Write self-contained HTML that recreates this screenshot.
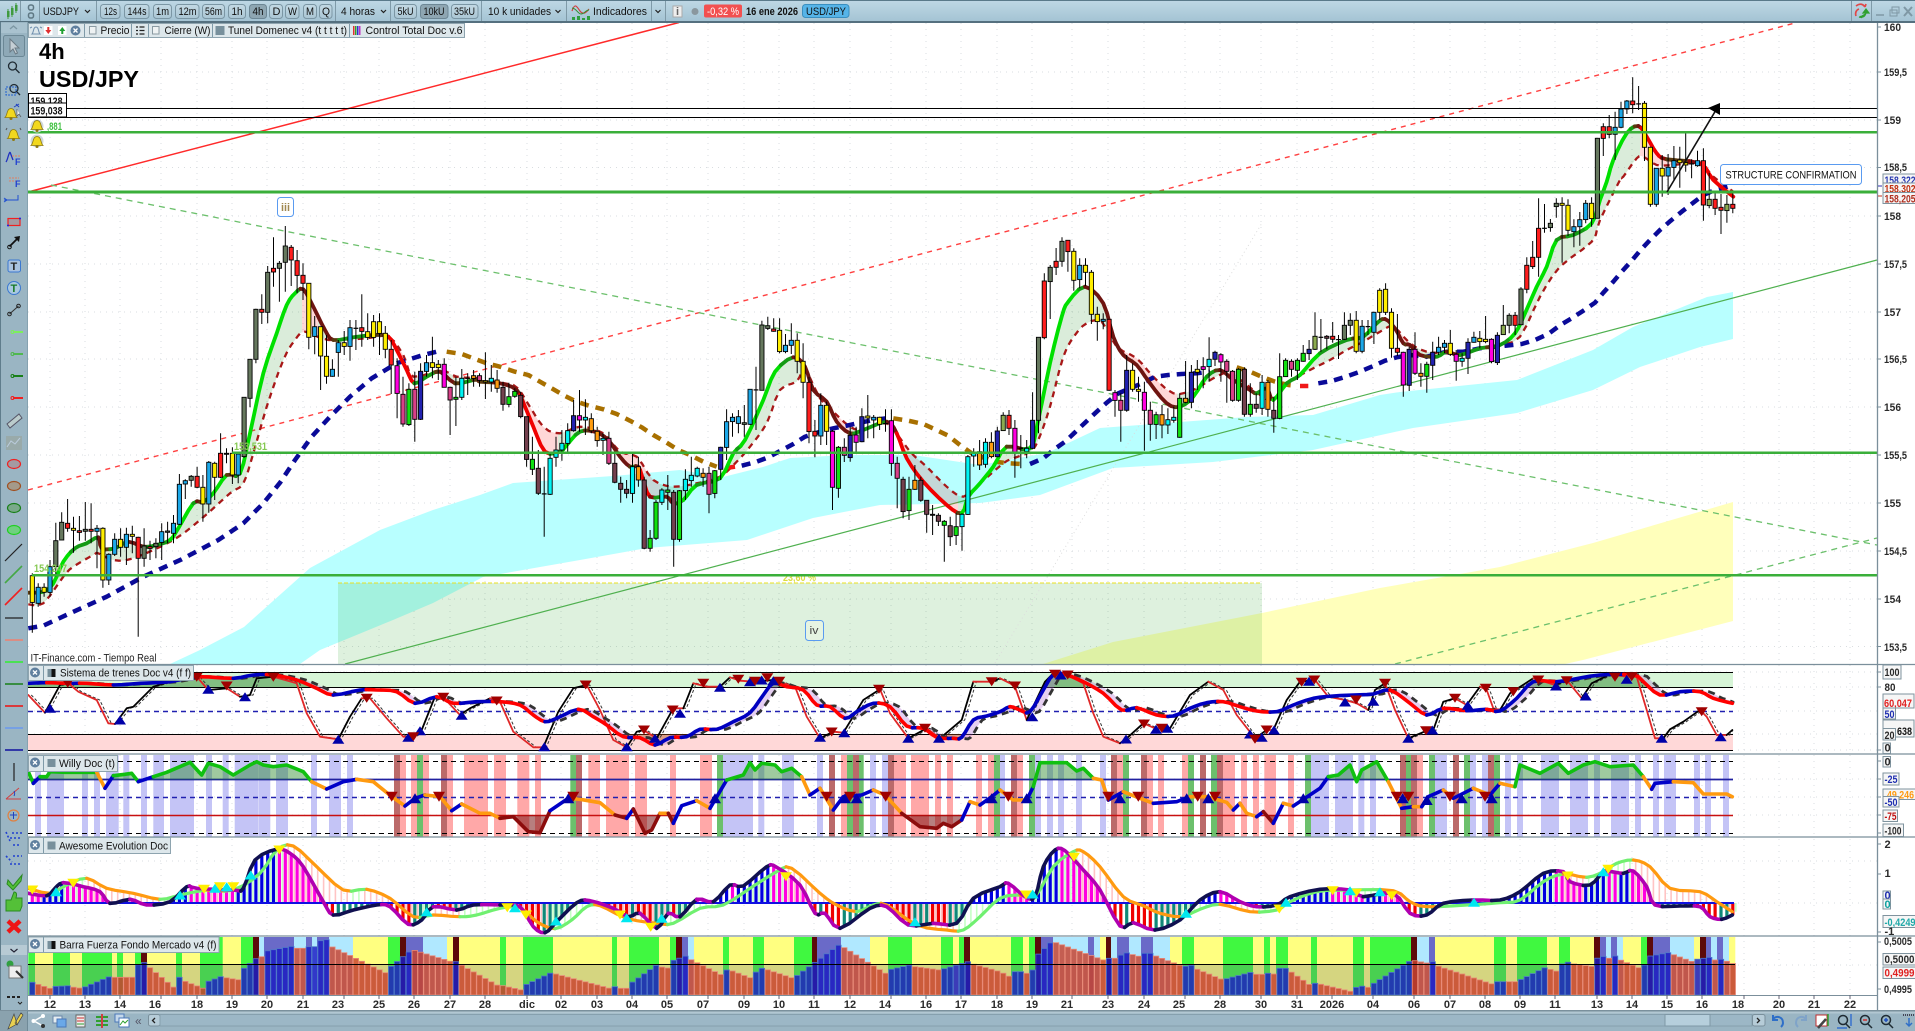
<!DOCTYPE html>
<html><head><meta charset="utf-8"><title>USD/JPY</title>
<style>
html,body{margin:0;padding:0;background:#fff;overflow:hidden}
svg{display:block}
text{font-family:"Liberation Sans",sans-serif;font-size:11px;fill:#111}
.b{font-weight:bold}
.ax{font-weight:bold;fill:#2a2a2a}
.t{font-weight:bold;fill:#2a2a2a;text-anchor:middle}
.btn{fill:url(#bg);stroke:#7b96a4}
.on{fill:#8ea6b2;stroke:#6d8795}
.sep{stroke:#7f9aa8;stroke-width:1}
.lb{fill:#dde7eb;stroke:#8ea4af}
.bx{fill:#f6f6f6;stroke:#7f939e}
</style></head><body>
<svg id="root" xmlns="http://www.w3.org/2000/svg" width="1915" height="1031" viewBox="0 0 1915 1031">
<defs>
<linearGradient id="tb" x1="0" y1="0" x2="0" y2="1"><stop offset="0" stop-color="#bfd8e5"/><stop offset="1" stop-color="#a3c3d3"/></linearGradient>
<linearGradient id="bg" x1="0" y1="0" x2="0" y2="1"><stop offset="0" stop-color="#c3d9e4"/><stop offset="1" stop-color="#aac6d4"/></linearGradient>
<g id="bell"><path d="M-6 4.500c2.500-2 1.500-9 6-9s3.500 7 6 9z" fill="#f2d81e" stroke="#8f7a10" stroke-width=".8"/><circle cy="5.500" r="1.500" fill="#8f7a10"/></g>
<g id="cl"><circle r="5" fill="#5f7f9e"/><path d="M-2-2L2 2M2-2L-2 2" stroke="#fff" stroke-width="1.300"/></g>
</defs>
<rect width="1915" height="1031" fill="#fff"/>

<g id="grid"></g>
<polygon fill="#b8ffff" points="170,664 200,650 244,627 310,568 380,530 433,510 480,495 513,483 613,476 680,470 723,477 763,467 790,458 847,455 913,455 980,465 1047,453 1100,428 1140,425 1247,417 1313,415 1380,395 1400,392 1517,380 1593,350 1633,327 1707,297 1733,292 1733,339 1700,347 1640,367 1593,390 1517,413 1413,428 1313,450 1213,462 1113,468 1040,495 980,503 880,505 813,518 747,540 647,548 580,560 483,577 433,603 393,620 320,650 300,664"/>
<polygon fill="#ffffbb" points="1043,664 1113,642 1262,613 1380,588 1500,567 1593,543 1733,502 1733,621 1583,660 1565,664"/>
<rect x="338" y="583" width="924" height="81" fill="#3caa3c" fill-opacity=".17"/>
<line x1="338" y1="583" x2="1262" y2="583" stroke="#e8e020" stroke-width="1" stroke-dasharray="4 2"/>
<text x="783" y="581" class="b" style="fill:#dcdc40;font-size:10px" textLength="33">23,60 %</text>
<line x1="995" y1="663" x2="1262" y2="223" stroke="#dcdcdc" stroke-width="1" stroke-dasharray="1 3"/>
<line x1="28" y1="192" x2="679" y2="22.500" stroke="#ff2a2a" stroke-width="1.500"/>
<line x1="28" y1="490" x2="1795" y2="23" stroke="#ff4040" stroke-width="1.400" stroke-dasharray="5 5"/>
<line x1="51" y1="185" x2="1877" y2="545" stroke="#6cc06c" stroke-width="1.300" stroke-dasharray="6 5"/>
<line x1="345" y1="664" x2="1877" y2="260" stroke="#4fb04f" stroke-width="1.200"/>
<line x1="1395" y1="664" x2="1877" y2="538" stroke="#6cc06c" stroke-width="1.300" stroke-dasharray="6 5"/>
<g id="ma"></g>
<g id="candles"></g>
<g fill="#3aaf3a">
<rect x="28" y="131" width="1849" height="2.500"/><rect x="28" y="190.500" width="1849" height="3"/>
<rect x="232" y="451.500" width="1645" height="2.500"/><rect x="32" y="574" width="1845" height="2.500"/>
</g>
<line x1="28" y1="108.500" x2="1877" y2="108.500" stroke="#000" stroke-width="1"/>
<line x1="28" y1="117.500" x2="1877" y2="117.500" stroke="#000" stroke-width="1"/>
<line x1="1667" y1="192" x2="1716" y2="110" stroke="#111" stroke-width="1.600"/>
<polygon points="1720,103 1708,108 1720,115" fill="#000"/>
<text x="234" y="450" class="b" style="fill:#84c850" textLength="33">153,531</text>
<text x="34" y="572" class="b" style="fill:#84c850" textLength="33">154,247</text>
<rect x="1720.500" y="164.500" width="141" height="20" rx="3" fill="#fff" stroke="#5a9bf0"/>
<text x="1725.500" y="178.500" textLength="131">STRUCTURE CONFIRMATION</text>
<rect x="277.500" y="197.500" width="16" height="19" rx="3" fill="#fff" stroke="#5a9bf0"/>
<text x="281" y="211" class="b" style="fill:#a08850" textLength="9">iii</text>
<rect x="805.500" y="620.500" width="18" height="20" rx="3" fill="#e6f4e2" stroke="#5a9bf0"/>
<text x="809.500" y="634" style="fill:#444" textLength="9">iv</text>

<text x="39" y="59" class="b" style="font-size:22px;fill:#000">4h</text>
<text x="39" y="87" class="b" style="font-size:23px;fill:#000" textLength="100">USD/JPY</text>
<rect x="28.500" y="93.500" width="38" height="10" fill="#fff" stroke="#000"/>
<text x="30.500" y="105" class="b" textLength="32">159,128</text>
<rect x="28.500" y="103" width="38" height="14" fill="#fff" stroke="#000"/>
<text x="30.500" y="114.500" class="b" textLength="32">159,038</text>
<text x="47" y="130" class="b" style="fill:#3fc040" textLength="15">,881</text>
<circle cx="37" cy="126" r="6.500" fill="#cfd8dc"/><use href="#bell" x="37" y="125"/>
<circle cx="37" cy="141" r="6.500" fill="#cfd8dc"/><use href="#bell" x="37" y="141"/>
<text x="30.500" y="661.500" textLength="126" style="fill:#222">IT-Finance.com - Tiempo Real</text>

<!-- panels -->
<g id="p2"></g><g id="p3"></g><g id="p4"></g><g id="p5"></g>
<g stroke="#7b8f9b" stroke-width="1.300">
<line x1="28" y1="664.500" x2="1915" y2="664.500"/><line x1="28" y1="754" x2="1915" y2="754"/>
<line x1="28" y1="837" x2="1915" y2="837"/><line x1="28" y1="936" x2="1915" y2="936"/>
<line x1="28" y1="995.500" x2="1878" y2="995.500" stroke-width="1"/>
<line x1="1877.500" y1="22" x2="1877.500" y2="1010"/>
</g>

<!-- panel labels -->
<rect x="28.500" y="665.500" width="165" height="15" class="lb"/><use href="#cl" x="35" y="672.500"/><line x1="43.500" y1="666" x2="43.500" y2="680" class="sep"/>
<rect x="47.500" y="669" width="8" height="8" fill="#111"/><rect x="47.500" y="669" width="4" height="8" fill="#78909c"/>
<text x="60" y="676.500" textLength="131">Sistema de trenes Doc v4 (f f)</text>
<rect x="28.500" y="755.500" width="89" height="16" class="lb"/><use href="#cl" x="35" y="762.500"/><line x1="43.500" y1="756" x2="43.500" y2="771" class="sep"/>
<rect x="47.500" y="759" width="8" height="8" fill="#78909c"/>
<text x="59" y="767" textLength="56">Willy Doc (t)</text>
<rect x="28.500" y="837.500" width="142" height="16" class="lb"/><use href="#cl" x="35" y="845"/><line x1="43.500" y1="838" x2="43.500" y2="853" class="sep"/>
<rect x="47.500" y="841.500" width="8" height="8" fill="#78909c"/>
<text x="59" y="849.500" textLength="109">Awesome Evolution Doc</text>
<rect x="28.500" y="937" width="190.500" height="15.500" class="lb"/><use href="#cl" x="35" y="944"/><line x1="43.500" y1="937" x2="43.500" y2="952" class="sep"/>
<rect x="47.500" y="941" width="8" height="8" fill="#111"/><rect x="47.500" y="941" width="4" height="8" fill="#78909c"/>
<text x="59.500" y="948.500" textLength="157">Barra Fuerza Fondo Mercado v4 (f)</text>

<!-- right axis -->
<g stroke="#7b8f9b"><path d="M1878 27h3M1878 72h3M1878 120h3M1878 167.500h3M1878 216h3M1878 264h3M1878 312h3M1878 359h3M1878 407h3M1878 455h3M1878 503h3M1878 551h3M1878 599h3M1878 646.500h3M1878 672h3M1878 687h3M1878 750h3M1878 761h3M1878 779h3M1878 797h3M1878 815h3M1878 833h3M1878 844h3M1878 874h3M1878 932h3M1878 942h3M1878 989h3"/></g>
<path d="M1878 186h4" stroke="#3030b0"/><path d="M1878 196h4" stroke="#c03020"/>
<g>
<text x="1884" y="31" class="ax" textLength="17">160</text>
<text x="1884" y="76" class="ax" textLength="23">159,5</text>
<text x="1884" y="124" class="ax" textLength="17">159</text>
<text x="1884" y="171" class="ax" textLength="23">158,5</text>
<text x="1884" y="220" class="ax" textLength="17">158</text>
<text x="1884" y="268" class="ax" textLength="23">157,5</text>
<text x="1884" y="316" class="ax" textLength="17">157</text>
<text x="1884" y="363" class="ax" textLength="23">156,5</text>
<text x="1884" y="411" class="ax" textLength="17">156</text>
<text x="1884" y="459" class="ax" textLength="23">155,5</text>
<text x="1884" y="507" class="ax" textLength="17">155</text>
<text x="1884" y="555" class="ax" textLength="23">154,5</text>
<text x="1884" y="603" class="ax" textLength="17">154</text>
<text x="1884" y="651" class="ax" textLength="23">153,5</text>
</g>
<rect x="1883" y="174" width="33" height="10" class="bx"/><text x="1884.500" y="184" class="b" style="fill:#2a3ab0" textLength="31">158,322</text>
<rect x="1883" y="183" width="33" height="9.500" class="bx"/><text x="1884.500" y="192.500" class="b" style="fill:#c03010" textLength="31">158,302</text>
<rect x="1883" y="192.500" width="33" height="11" class="bx"/><text x="1884.500" y="202.500" class="b" style="fill:#b03020" textLength="31">158,205</text>

<rect x="1883" y="694" width="31" height="14" class="bx"/><text x="1884" y="707" class="b" style="fill:#e02020" textLength="28">60,047</text>
<rect x="1883" y="720" width="31" height="17" class="bx"/><text x="1897" y="735" class="b" textLength="15">638</text>
<rect x="1883" y="665" width="18" height="14" class="bx"/><text x="1884.500" y="676" class="ax" textLength="15">100</text>
<text x="1884.500" y="691" class="ax" textLength="11">80</text>
<rect x="1883" y="708" width="12.500" height="11" class="bx"/><text x="1884.500" y="718" class="b" style="fill:#2030b0" textLength="10">50</text>
<rect x="1883" y="728.500" width="12.500" height="11.500" class="bx"/><text x="1884.500" y="739" class="ax" textLength="10">20</text>
<rect x="1883" y="743" width="7.500" height="10.500" class="bx"/><text x="1884.500" y="751.500" class="ax">0</text>
<rect x="1883" y="756.500" width="7.500" height="10.500" class="bx"/><text x="1884.500" y="765.500" class="ax">0</text>
<rect x="1883" y="773" width="16" height="12" class="bx"/><text x="1884.500" y="783" class="b" style="fill:#2030b0" textLength="13">-25</text>
<rect x="1883" y="789" width="33" height="10.500" class="bx"/><text x="1887" y="798.500" class="b" style="fill:#ff9a10" textLength="27">49,246</text>
<rect x="1883" y="796.500" width="16" height="10.500" class="bx"/><text x="1884.500" y="806" class="b" style="fill:#2030b0" textLength="13">-50</text>
<rect x="1883" y="810" width="14.500" height="11.500" class="bx"/><text x="1884.500" y="820" class="b" style="fill:#c01010" textLength="12">-75</text>
<rect x="1883" y="824" width="20.500" height="12.500" class="bx"/><text x="1884.500" y="834.500" class="ax" textLength="17">-100</text>
<text x="1884.500" y="848" class="ax">2</text><text x="1884.500" y="877" class="ax">1</text>
<rect x="1883" y="891" width="7.500" height="10" class="bx"/><text x="1884.500" y="899" class="b" style="fill:#2030b0">0</text>
<rect x="1883" y="899" width="7.500" height="10" class="bx"/><text x="1884.500" y="908" class="b" style="fill:#10a0a0">0</text>
<rect x="1883" y="915.500" width="33" height="12" class="bx"/><text x="1884.500" y="926" class="b" style="fill:#20a8a8" textLength="31">-0,4249</text>
<text x="1884.500" y="935" class="ax">-1</text>
<text x="1884" y="945" class="ax" textLength="28">0,5005</text>
<rect x="1883" y="953.500" width="33" height="11.500" class="bx"/><text x="1884.500" y="963" class="ax" textLength="30">0,5000</text>
<rect x="1883" y="967" width="33" height="11.500" class="bx"/><text x="1884.500" y="976.500" class="b" style="fill:#e02020" textLength="30">0,4999</text>
<text x="1884" y="993" class="ax" textLength="28">0,4995</text>

<!-- time axis -->
<g id="tt"></g>
<text class="t" x="50" y="1008">12</text><text class="t" x="85" y="1008">13</text><text class="t" x="120" y="1008">14</text><text class="t" x="155" y="1008">16</text><text class="t" x="197" y="1008">18</text><text class="t" x="232" y="1008">19</text><text class="t" x="267" y="1008">20</text><text class="t" x="303" y="1008">21</text><text class="t" x="338" y="1008">23</text><text class="t" x="379" y="1008">25</text><text class="t" x="414" y="1008">26</text><text class="t" x="450" y="1008">27</text><text class="t" x="485" y="1008">28</text><text class="t" x="527" y="1008">dic</text><text class="t" x="561" y="1008">02</text><text class="t" x="597" y="1008">03</text><text class="t" x="632" y="1008">04</text><text class="t" x="667" y="1008">05</text><text class="t" x="703" y="1008">07</text><text class="t" x="744" y="1008">09</text><text class="t" x="779" y="1008">10</text><text class="t" x="814" y="1008">11</text><text class="t" x="850" y="1008">12</text><text class="t" x="885" y="1008">14</text><text class="t" x="926" y="1008">16</text><text class="t" x="961" y="1008">17</text><text class="t" x="997" y="1008">18</text><text class="t" x="1032" y="1008">19</text><text class="t" x="1067" y="1008">21</text><text class="t" x="1108" y="1008">23</text><text class="t" x="1144" y="1008">24</text><text class="t" x="1179" y="1008">25</text><text class="t" x="1220" y="1008">28</text><text class="t" x="1261" y="1008">30</text><text class="t" x="1297" y="1008">31</text><text class="t" x="1332" y="1008">2026</text><text class="t" x="1373" y="1008">04</text><text class="t" x="1414" y="1008">06</text><text class="t" x="1450" y="1008">07</text><text class="t" x="1485" y="1008">08</text><text class="t" x="1520" y="1008">09</text><text class="t" x="1555" y="1008">11</text><text class="t" x="1597" y="1008">13</text><text class="t" x="1632" y="1008">14</text><text class="t" x="1667" y="1008">15</text><text class="t" x="1702" y="1008">16</text><text class="t" x="1738" y="1008">18</text><text class="t" x="1779" y="1008">20</text><text class="t" x="1814" y="1008">21</text><text class="t" x="1850" y="1008">22</text>

<!-- top toolbar -->
<rect width="1915" height="22" fill="url(#tb)"/>
<rect width="1915" height="1" fill="#5a7a8a"/><rect y="21" width="1915" height="2" fill="#55707f"/>
<g fill="#3f9a3f"><rect x="7" y="11" width="2.500" height="6"/><rect x="11" y="8" width="2.500" height="7"/><rect x="15" y="5" width="2.500" height="6"/></g>
<path d="M8 9v10M12 6v11M16 3v10" stroke="#3f9a3f"/>
<g fill="none" stroke="#5f7884" stroke-width="1.500"><rect x="28.500" y="5" width="5" height="5" rx="2"/><rect x="28.500" y="13" width="5" height="5" rx="2"/></g>
<g><line x1="20.500" y1="1" x2="20.500" y2="21" class="sep"/><line x1="39.500" y1="1" x2="39.500" y2="21" class="sep"/><line x1="96.500" y1="1" x2="96.500" y2="21" class="sep"/><line x1="335.500" y1="1" x2="335.500" y2="21" class="sep"/><line x1="390.500" y1="1" x2="390.500" y2="21" class="sep"/><line x1="481.500" y1="1" x2="481.500" y2="21" class="sep"/><line x1="566.500" y1="1" x2="566.500" y2="21" class="sep"/><line x1="651.500" y1="1" x2="651.500" y2="21" class="sep"/><line x1="665.500" y1="1" x2="665.500" y2="21" class="sep"/><line x1="1851.500" y1="1" x2="1851.500" y2="21" class="sep"/><line x1="1871.500" y1="1" x2="1871.500" y2="21" class="sep"/></g>
<text x="43" y="15" textLength="36">USDJPY</text>
<path d="M85 10l2.500 2.500L90 10M381 10l2.500 2.500L386 10M555.500 10l2.500 2.500L560.500 10M655.500 10l2.500 2.500L660.500 10" fill="none" stroke="#222" stroke-width="1.200"/>
<rect x="100.500" y="4.500" width="19.500" height="14" rx="3" class="btn"/><text x="104" y="15" textLength="13">12s</text>
<rect x="124.500" y="4.500" width="24.500" height="14" rx="3" class="btn"/><text x="127.500" y="15" textLength="19">144s</text>
<rect x="153.500" y="4.500" width="18" height="14" rx="3" class="btn"/><text x="156" y="15" textLength="13">1m</text>
<rect x="175.500" y="4.500" width="23.500" height="14" rx="3" class="btn"/><text x="178.500" y="15" textLength="18">12m</text>
<rect x="202.500" y="4.500" width="22" height="14" rx="3" class="btn"/><text x="205" y="15" textLength="17">56m</text>
<rect x="228.500" y="4.500" width="17" height="14" rx="3" class="btn"/><text x="231.500" y="15" textLength="11">1h</text>
<rect x="249.500" y="4.500" width="17" height="14" rx="3" class="on"/><text x="252.500" y="15" textLength="11">4h</text>
<rect x="269.500" y="4.500" width="13" height="14" rx="3" class="btn"/><text x="272.500" y="15">D</text>
<rect x="285.500" y="4.500" width="13.500" height="14" rx="3" class="btn"/><text x="288" y="15" textLength="9">W</text>
<rect x="303.500" y="4.500" width="13" height="14" rx="3" class="btn"/><text x="306" y="15" textLength="8">M</text>
<rect x="319.500" y="4.500" width="12.500" height="14" rx="3" class="btn"/><text x="322" y="15" textLength="8">Q</text>
<text x="341" y="15" textLength="34">4 horas</text>
<rect x="394.500" y="4.500" width="22" height="14" rx="3" class="btn"/><text x="397.500" y="15" textLength="16">5kU</text>
<rect x="420.500" y="4.500" width="27.500" height="14" rx="3" class="on"/><text x="423.500" y="15" textLength="21">10kU</text>
<rect x="451.500" y="4.500" width="26.500" height="14" rx="3" class="btn"/><text x="454" y="15" textLength="21">35kU</text>
<text x="488" y="15" textLength="63">10 k unidades</text>
<path d="M572 11c3-9 5-4 8 0s6 2 9-2" fill="none" stroke="#d04040" stroke-width="1.200"/><path d="M572 8c4 0 6 6 9 6s5-4 8-4" fill="none" stroke="#2f8f2f"/><path d="M572 20v-3h3v3zM577 20v-4h3v4zM582 20v-2h3v2zM587 20v-4h3v4z" fill="#2f9f3f"/>
<text x="593" y="15" textLength="54">Indicadores</text>
<rect x="673" y="6" width="9" height="11" fill="#eee" stroke="#aaa"/><text x="676" y="15" class="b" style="fill:#666">i</text>
<circle cx="695" cy="11.500" r="3.500" fill="#8a979e"/>
<rect x="704" y="4.500" width="38" height="13" rx="2" fill="#f25050"/><text x="707" y="15" style="fill:#fff" textLength="32">-0,32 %</text>
<text x="746" y="15" class="b" textLength="52">16 ene 2026</text>
<rect x="802.500" y="4.500" width="46.500" height="13" rx="3" fill="#56b4e8" stroke="#3a8fc0"/><text x="806" y="15" textLength="40">USD/JPY</text>
<path d="M1856 6c4-3 7-2 9 1M1865 7l1-3M1856 16c-1-3 0-6 3-7" fill="none" stroke="#e04848" stroke-width="1.700"/>
<path d="M1859 17c3 1 6 0 7-4M1863 13h6l-3-4zM1860 16l2 2" fill="#30a030" stroke="#30a030" stroke-width="1.200"/>
<path d="M1876 15h8" stroke="#7f98a5" stroke-width="1.500"/><rect x="1890" y="10" width="7" height="6" fill="none" stroke="#7f98a5"/><rect x="1892" y="7" width="7" height="6" fill="none" stroke="#7f98a5"/>
<path d="M1904 7l8 9M1912 7l-8 9" stroke="#7f98a5" stroke-width="2"/>

<!-- legend -->
<rect x="28.500" y="23.500" width="436" height="14" class="lb"/>
<g fill="none" stroke="#6f8fae"><path d="M32 34c2-2 1-7 4-7s2 5 4 7zM30 28l2-1M42 28l-2-1"/></g>
<rect x="44" y="26" width="8.500" height="9" fill="#fff"/><path d="M48.300 34l-3-4h2v-3h2v3h2z" fill="#e03030"/>
<rect x="58" y="26" width="8.500" height="9" fill="#fff"/><path d="M62.300 27l-3 4h2v3h2v-3h2z" fill="#20a030"/>
<use href="#cl" x="75.500" y="30.500"/>
<line x1="84.500" y1="24" x2="84.500" y2="37" class="sep"/><line x1="131.500" y1="24" x2="131.500" y2="37" class="sep"/><line x1="148.500" y1="24" x2="148.500" y2="37" class="sep"/><line x1="212.500" y1="24" x2="212.500" y2="37" class="sep"/><line x1="349.500" y1="24" x2="349.500" y2="37" class="sep"/>
<rect x="89.500" y="26.500" width="6.500" height="7.500" fill="#eef2f3" stroke="#8a9aa2"/>
<text x="100.500" y="34" textLength="29">Precio</text>
<path d="M136 27h2M136 30.500h2M136 34h2M139.500 27h5M139.500 30.500h5M139.500 34h5" stroke="#222" stroke-width="1.300"/>
<rect x="152.500" y="26.500" width="6.500" height="7.500" fill="#eef2f3" stroke="#8a9aa2"/>
<text x="164.500" y="34" textLength="46">Cierre (W)</text>
<rect x="215.500" y="26" width="9" height="9" fill="#78909c"/>
<text x="228" y="34" textLength="119">Tunel Domenec v4 (t t t t t)</text>
<g><rect x="353" y="26" width="1.500" height="9" fill="#e03030"/><rect x="355" y="26" width="1.500" height="9" fill="#30a030"/><rect x="357" y="26" width="1.500" height="9" fill="#3030d0"/><rect x="359" y="26" width="1.500" height="9" fill="#c030c0"/></g>
<text x="365.500" y="34" textLength="97">Control Total Doc v.6</text>

<!-- left toolbar -->
<rect y="22" width="28" height="988" fill="#9ab5c3"/>
<rect width="1" y="22" height="1009" fill="#5f7d8c"/><rect x="27" y="22" width="1" height="988" fill="#86a2b0"/>
<rect x="1" y="23" width="26" height="10" fill="#a9c2cf"/><path d="M10 29l3.500-3 3.500 3" fill="none" stroke="#7c96a3" stroke-width="1.400"/>
<rect x="3.500" y="35.500" width="21" height="21" rx="2" fill="#8ea9b7" stroke="#6b8795"/>
<path d="M10 39v13l3-3 2.500 5 2-1-2.500-5h4z" fill="#c5cfd5" stroke="#6b7b85"/>
<g fill="none" stroke="#1f2b33" stroke-width="1.300"><circle cx="12.500" cy="66" r="4"/><path d="M15.500 69l4 4"/><circle cx="14" cy="88.500" r="4"/><path d="M17 92l3 3"/></g>
<rect x="6" y="87" width="10" height="8" fill="none" stroke="#2060d0" stroke-dasharray="2 1"/>
<use href="#bell" x="11" y="113"/><path d="M14 107l5-3M19 107l-3-3" stroke="#2040c0"/><path d="M17 109v7l2-2 2 3" fill="#fff" stroke="#555" stroke-width=".7"/>
<use href="#bell" x="13.500" y="134"/><path d="M6 130l1-2M21 130l-1-2" stroke="#555"/>
<path d="M6 162c2-3 2-7 4-10M10 152l3 8" fill="none" stroke="#2030c0" stroke-width="1.300"/><path d="M12 156h9" stroke="#e08060" stroke-dasharray="2 1"/><text x="15" y="165" class="b" style="fill:#2040d0;font-size:9px">F</text>
<path d="M9 178h10M9 181h8" stroke="#e08060" stroke-dasharray="2 1"/><text x="15" y="187" class="b" style="fill:#2040d0;font-size:9px">F</text>
<path d="M4 200h14v-5" stroke="#2050d0" fill="none"/><path d="M4 198l3 2-3 2" stroke="#2050d0" fill="none"/>
<rect x="8" y="218.500" width="12" height="7" fill="#a49aa2" stroke="#f02020" stroke-width="1.200"/><circle cx="8" cy="225.500" r="1" fill="#2020e0"/><circle cx="20" cy="218.500" r="1" fill="#2020e0"/>
<path d="M9.500 246.500l8-8" stroke="#111" stroke-width="1.800"/><polygon points="20,236 14,237 19,242" fill="#111"/><circle cx="9.500" cy="247" r="1.800" fill="none" stroke="#111"/>
<rect x="8" y="260" width="12.500" height="12" rx="2" fill="#a9c2df" stroke="#3a78d0"/><text x="10.500" y="270" class="b" style="fill:#222">T</text>
<circle cx="14" cy="288" r="6.500" fill="#a9c8df" stroke="#3a78d0"/><text x="10.500" y="292" class="b" style="fill:#187a28">T</text>
<path d="M9.500 314l9-8" stroke="#333" stroke-width="1.100"/><circle cx="9.500" cy="314" r="1.800" fill="none" stroke="#222"/><circle cx="18.500" cy="306" r="1.800" fill="none" stroke="#222"/>
<path d="M13 332h10" stroke="#7cf05c" stroke-width="2"/><circle cx="12.500" cy="332" r="1.500" fill="none" stroke="#7cf05c"/>
<path d="M13 354h10" stroke="#50b850" stroke-width="2"/><circle cx="12.500" cy="354" r="1.500" fill="none" stroke="#50b850"/>
<path d="M13 376h10" stroke="#188018" stroke-width="2"/><circle cx="12.500" cy="376" r="1.500" fill="none" stroke="#188018"/>
<path d="M13 398h10" stroke="#f02020" stroke-width="2"/><circle cx="12.500" cy="398" r="1.500" fill="none" stroke="#f02020"/>
<path d="M7 424l12-10 3 4-12 10z" fill="#bcc" stroke="#556"/>
<rect x="6" y="436" width="16" height="14" fill="#9aa"/><path d="M7 447l4-6 4 3 5-6" fill="none" stroke="#bcd"/>
<ellipse cx="14" cy="464" rx="6.500" ry="4.500" fill="#a49aa2" stroke="#f02020" stroke-width="1.200"/>
<ellipse cx="14" cy="486" rx="6.500" ry="4.500" fill="#a49a8a" stroke="#a05020" stroke-width="1.200"/>
<ellipse cx="14" cy="508" rx="6.500" ry="4.500" fill="#7aa98a" stroke="#188018" stroke-width="1.200"/>
<ellipse cx="14" cy="530" rx="6.500" ry="4.500" fill="#70d080" stroke="#20d020" stroke-width="1.200"/>
<path d="M5 561l17-17" stroke="#222" stroke-width="1.200"/><path d="M5 583l17-17" stroke="#45a845" stroke-width="1.600"/><path d="M5 605l17-17" stroke="#f02020" stroke-width="1.600"/>
<path d="M5 618h18" stroke="#222" stroke-width="1.200"/><path d="M5 640h18" stroke="#f08070" stroke-width="1.600"/>
<path d="M5 662h18" stroke="#30f030" stroke-width="1.600"/><path d="M5 684h18" stroke="#188018" stroke-width="1.600"/><path d="M5 706h18" stroke="#f01010" stroke-width="1.600"/><path d="M5 728h18" stroke="#6a9af0" stroke-width="1.600"/><path d="M5 750h18" stroke="#1010a0" stroke-width="1.600"/>
<path d="M14 763v18" stroke="#222" stroke-width="1.200"/>
<path d="M6 799l13-11M6 799h15" stroke="#d04040" fill="none"/><path d="M14 796c1-2 1-3 0-5" stroke="#2040c0" fill="none"/>
<circle cx="13.500" cy="815.500" r="5.500" fill="none" stroke="#e08040" stroke-width="1.200"/><path d="M10 815h7M13.500 812v7" stroke="#2040c0"/>
<path d="M6 832l4 9M12 833h10M10 838h12M13 845h6" stroke="#2040d0" stroke-width="1.600" stroke-dasharray="2 2"/>
<path d="M6 856l6 6M13 856h9M10 864h12" stroke="#2040d0" stroke-width="1.600" stroke-dasharray="2 2"/>
<path d="M8 880l5 6 9-11-1 6-8 9-6-6z" fill="#54c038" stroke="#2a8a20"/>
<path d="M6 900h5l3-8c3 0 3 3 2 6h6v8l-2 5H6z" fill="#54c038" stroke="#2a8a20"/>
<path d="M8 921l12 11M20 921l-12 11" stroke="#ee1515" stroke-width="4.500"/>
<rect x="1" y="945" width="26" height="10" fill="#b7cad4"/><path d="M10.500 949l3.500 3 3.500-3" fill="none" stroke="#223" stroke-width="1.200"/>
<circle cx="10" cy="964" r="3.500" fill="#30a040"/><rect x="9" y="966" width="12" height="12" fill="#eee" stroke="#777"/><path d="M16 971l7 7" stroke="#333" stroke-width="2.200"/>
<path d="M7 997h3M12 997h3M17 997h3" stroke="#222" stroke-width="2"/><path d="M18 1002l2 2 2-2" stroke="#222" fill="none"/>
<!-- bottom bar -->
<rect x="0" y="1010" width="1915" height="21" fill="#9ab5c3"/><rect x="0" y="1010" width="1915" height="1.500" fill="#7a909c"/>
<rect x="28" y="1011.500" width="1887" height="2" fill="#b2c7d2"/>
<rect x="0" y="1011" width="28" height="20" fill="#8aa2ae"/><rect y="1011" x="27" width="1" height="20" fill="#6f8a98"/>
<path d="M8 1029l6-15 3 10zM15 1023l6-10 2 2-6 10z" fill="#e8d050" stroke="#444" stroke-width=".7"/>
<path d="M34 1021l9-5M34 1021l9 5" stroke="#fff" stroke-width="1.500"/><circle cx="33.500" cy="1021" r="2" fill="#fff"/><circle cx="43" cy="1016" r="2" fill="#fff"/><circle cx="43" cy="1026" r="2" fill="#333"/>
<rect x="53" y="1016" width="9" height="7" fill="#e5edf1" stroke="#6a86a8"/><rect x="57" y="1019" width="9" height="8" fill="#6aa8e8" stroke="#4a78b8"/>
<rect x="76" y="1015" width="9" height="12" fill="#eee" stroke="#666"/><path d="M77 1018h7M77 1021h7" stroke="#d03030"/><path d="M77 1024h7" stroke="#30a030"/>
<path d="M96 1017h12M96 1021h12M96 1025h12" stroke="#30a030" stroke-width="2"/><path d="M102 1014v14" stroke="#d04040" stroke-width="2"/>
<rect x="115" y="1014" width="9" height="8" fill="#c5d8ea" stroke="#4a78b8"/><rect x="119" y="1018" width="10" height="9" fill="#fff" stroke="#4a78b8"/><path d="M120 1025l3-4 2 2 3-3" stroke="#30a030" fill="none"/>
<text x="135" y="1025" style="fill:#556;font-size:12px">«</text>
<rect x="148.500" y="1014.500" width="11.500" height="11.500" rx="2" fill="#b6ccd8" stroke="#7a909c"/><path d="M155 1018l-2.500 2.500 2.500 2.500" stroke="#222" fill="none" stroke-width="1.300"/>
<rect x="160" y="1014.500" width="1592" height="11.500" fill="#9cb7c6" stroke="#86a0ae"/>
<rect x="1665" y="1014.500" width="45" height="11.500" fill="#b6cfdc" stroke="#7f98a6"/>
<rect x="1752.500" y="1014.500" width="12.500" height="11.500" rx="2" fill="#b6ccd8" stroke="#7a909c"/><path d="M1757 1018l2.500 2.500-2.500 2.500" stroke="#222" fill="none" stroke-width="1.300"/>
<path d="M1773 1019c4-4 10-2 10 4 0 2-1 3-2 4M1773 1015v5h5" fill="none" stroke="#2f6fc8" stroke-width="2"/>
<path d="M1806 1019c-4-4-10-2-10 4 0 2 1 3 2 4M1806 1015v5h-5" fill="none" stroke="#7fa3c8" stroke-width="2"/>
<rect x="1816" y="1015" width="11" height="11" fill="#fff" stroke="#c03030"/><path d="M1818 1028l8-9" stroke="#444" stroke-width="2.500"/><path d="M1828 1014v12" stroke="#30a030" stroke-width="1.500"/>
<g fill="none" stroke="#1f2b33" stroke-width="1.500"><circle cx="1843" cy="1020" r="4.500"/><path d="M1846 1024l4 4"/><circle cx="1865" cy="1020" r="4.500"/><path d="M1868 1024l4 4"/><circle cx="1886" cy="1020" r="4.500"/><path d="M1889 1024l4 4"/></g>
<path d="M1851 1014v12M1837 1028h10" stroke="#2060d0" stroke-width="1.200"/><path d="M1863 1020h4" stroke="#d03030" stroke-width="1.500"/><path d="M1884 1020h4M1886 1018v4" stroke="#2050c0" stroke-width="1.500"/>
<path d="M1903 1015h12" stroke="#445" stroke-dasharray="1 1" stroke-width="2"/><path d="M1909 1018v8M1906 1023l3 3 3-3" stroke="#2f6fc8" fill="none" stroke-width="1.500"/>
</svg>
<script>
(function(){
var $=function(i){return document.getElementById(i)};
document.querySelectorAll('text[textLength]').forEach(function(t){t.setAttribute('lengthAdjust','spacingAndGlyphs')});
function P(ox,oy,s){return s.trim().split(/\s+/).map(function(t){var a=t.split(',');return [+(ox+a[0]/3).toFixed(1),+(oy+a[1]/3).toFixed(1)]})}
function pl(p){return p.map(function(a){return a[0]+','+a[1]}).join(' ')}
function sm(p){var o=[];for(var i=0;i<p.length-1;i++){var a=p[i-1]||p[i],b=p[i],c=p[i+1],d=p[i+2]||c;for(var t=0;t<3;t++){var u=t/3,u2=u*u,u3=u2*u;
 var f=function(k){return +(.5*(2*b[k]+(c[k]-a[k])*u+(2*a[k]-5*b[k]+4*c[k]-d[k])*u2+(3*b[k]-a[k]-3*c[k]+d[k])*u3)).toFixed(1)};o.push([f(0),f(1)])}}o.push(p[p.length-1]);return o}
function seg(pts,fn,w){var s='',i=0;while(i<pts.length-1){var c=fn(pts[i],pts[i+1]),d='M'+pts[i];var j=i;while(j<pts.length-1&&fn(pts[j],pts[j+1])==c){d+='L'+pts[j+1];j++}s+='<path d="'+d+'" stroke="'+c+'" stroke-width="'+w+'" stroke-linecap="round" stroke-linejoin="round" fill="none"/>';i=j}return s}
function tri(x,y,up,c,h,w){h=h||4.5;w=w||6;return '<polygon fill="'+c+'" points="'+(up?(x-w)+','+(y+h)+' '+(x+w)+','+(y+h)+' '+x+','+(y-h):(x-w)+','+(y-h)+' '+(x+w)+','+(y-h)+' '+x+','+(y+h))+'"/>'}
function lerpY(pts,x){if(x<=pts[0][0])return pts[0][1];for(var i=0;i<pts.length-1;i++){if(x<=pts[i+1][0]){var a=pts[i],b=pts[i+1];return a[1]+(b[1]-a[1])*(x-a[0])/((b[0]-a[0])||1)}}return pts[pts.length-1][1]}
var CX=function(i){return 32.3+i*5.884};

/* grid */
var gx=[50,85,120,161,197,232,267,303,344,379,414,450,485,527,561,597,632,667,708,744,779,814,850,891,926,961,997,1032,1072,1108,1144,1185,1220,1261,1297,1332,1373,1414,1450,1485,1520,1555,1597,1632,1667,1702,1744,1779,1814,1850];
var gy=[72,120,167.5,216,264,312,359,407,455,503,551,599,646.5,672,687,711,734,750,779,797,815,861,903,965];
var g='';gx.forEach(function(x){g+='<line x1="'+x+'" x2="'+x+'" y1="23" y2="995" stroke="#d9dde0" stroke-dasharray="1 5"/>'});
gy.forEach(function(y){g+='<line x1="28" x2="1877" y1="'+y+'" y2="'+y+'" stroke="#d9dde0" stroke-dasharray="1 5"/>'});
$('grid').innerHTML=g;
var tk='';gx.forEach(function(x){tk+='<line x1="'+x+'" x2="'+x+'" y1="995" y2="999" stroke="#667"/>'});$('tt').innerHTML=tk;

/* MAs */
var fast=sm(P(0,200,'85,1178 130,1175 160,1150 190,1085 225,1045 260,1030 295,1012 305,1045 345,1045 385,1025 430,1040 470,1035 510,1020 535,985 580,910 610,905 640,880 680,825 720,820 750,700 790,520 830,400 860,315 885,280 910,268 940,320 975,390 1000,420 1060,412 1120,405 1165,410 1190,450 1220,510 1243,550 1280,530 1320,515 1365,550 1420,540 1439,540')
.concat(P(480,270,'0,335 60,340 110,360 135,410 160,470 195,545 240,545 265,520 300,485 345,485 385,510 420,560 450,590 475,590 490,630 510,680 560,680 580,700 610,690 650,645 720,625 760,550 795,510 850,390 885,305 940,262 975,290 1000,360 1040,395 1070,455 1110,490 1150,480 1220,455 1250,490 1280,565 1330,635 1400,705 1445,730 1465,680 1500,640'))
.concat(P(980,220,'40,740 80,680 150,685 175,600 210,430 245,290 265,245 315,200 370,250 400,350 430,405 470,435 510,490 560,550 600,560 640,530 680,470 720,450 760,480 810,510 830,520 860,505 880,540 920,490 960,465 1020,400 1100,360 1150,350 1190,310 1215,297 1245,325 1270,370 1290,375 1320,405 1370,410 1400,395 1440,405 1500,385'))
.concat(P(1400,180,'300,495 345,460 375,400 410,320 440,260 470,180 520,165 575,130 600,60 620,5'))
.concat(P(1500,0,'340,480 380,400 415,378 440,410 470,460 500,478 600,490 640,540 700,590')));
var slow=sm(P(0,200,'85,1213 130,1210 190,1130 220,1100 280,1065 295,1060 340,1080 400,1075 520,1020 600,960 690,880 730,850 760,760 800,620 850,480 885,420 915,395 985,420 1100,415 1165,410 1210,465 1240,530 1320,510 1370,530 1439,535')
.concat(P(480,270,'0,335 100,345 140,395 190,470 240,490 300,470 370,490 420,545 470,560 520,630 580,650 650,640 720,620 770,575 810,530 860,460 900,360 950,335 975,300 1020,385 1060,425 1110,470 1150,480 1220,460 1290,545 1340,590 1400,650 1450,680 1500,640'))
.concat(P(980,220,'70,730 100,715 150,695 175,660 210,560 250,410 285,345 320,310 365,305 410,380 470,415 520,470 580,520 640,510 700,475 750,460 820,510 875,540 920,490 990,450 1050,420 1100,390 1150,365 1200,335 1240,320 1290,370 1340,395 1400,400 1440,405 1500,385'))
.concat(P(1400,180,'300,495 360,470 420,350 480,260 575,185 600,120 660,0'))
.concat(P(1500,0,'370,530 410,475 430,470 470,495 520,495 600,490 640,530 700,575')));
var poly=pl(fast.concat(slow.slice().reverse()));
var red=[[302,318],[387,415],[525,558],[620,660],[808,850],[897,958],[1120,1177],[1393,1410],[1640,1735]];
var s='<clipPath id="cr">',last=28,cg='<clipPath id="cg">';
red.forEach(function(r){s+='<rect x="'+r[0]+'" y="0" width="'+(r[1]-r[0])+'" height="700"/>';cg+='<rect x="'+last+'" y="0" width="'+(r[0]-last)+'" height="700"/>';last=r[1]});
s+='</clipPath>'+cg+'</clipPath>';
s+='<polygon points="'+poly+'" fill="#229022" fill-opacity=".17" clip-path="url(#cg)"/>';
s+='<polygon points="'+poly+'" fill="#ff2020" fill-opacity=".18" clip-path="url(#cr)"/>';
s+='<polyline points="'+pl(slow)+'" fill="none" stroke="#a81818" stroke-width="2.300" stroke-dasharray="6 5"/>';
function dp(c,p){return '<polyline points="'+pl(p)+'" fill="none" stroke="'+c+'" stroke-width="4.500" stroke-dasharray="9 7" stroke-linejoin="round"/>'}
var N='#0a0a98',BR='#a87000';
s+=dp(N,P(0,200,'85,1285 130,1277 210,1240 320,1190 430,1130 545,1078 655,1020 730,970 790,910 840,848 885,780 935,710 990,650 1050,590 1115,535 1190,490 1270,465 1310,455'));
s+=dp(BR,P(0,200,'1340,455 1385,462 1460,490').concat(P(480,270,'20,280 60,290 105,305 145,315 180,335 215,355 255,378 290,395 330,408 370,418 410,432 450,452 485,472 520,495 560,518 595,540 630,555 670,575 710,590')));
s+=dp('#f01818',P(480,270,'745,593 765,590'));
s+=dp(N,P(480,270,'785,587 825,577 865,562 900,543 940,522 975,500 1020,485 1060,475 1100,467 1140,458 1180,450 1220,445'));
s+=dp(BR,P(480,270,'1240,445 1285,452 1330,462 1365,478 1405,497 1440,525 1475,550').concat(P(980,220,'45,725 85,730 125,732')));
s+=dp(N,P(980,220,'150,732 190,715 220,690 255,665 285,637 315,608 345,580 380,548 415,520 490,488 525,470 565,465 605,462 650,460 690,455'));
s+=dp(BR,P(980,220,'770,442 810,455 845,470 885,485 925,495 950,497'));
s+=dp('#f01818',P(980,220,'960,498 985,498'));
s+=dp(N,P(980,220,'1015,490 1055,483 1095,471 1135,457 1175,440 1215,422 1250,412 1290,405 1340,410 1400,395 1450,395 1500,385').concat(P(1400,180,'315,497 365,492 405,480 445,462 480,436 515,415 550,392 585,368 610,338 640,305 665,275 695,242 720,212 750,180 780,150 812,122 845,95 880,68')).concat(P(1500,0,'610,585 650,568 690,558')));
var hot=[[385,415],[520,560],[640,655],[895,965],[1640,1735]];
s+=seg(fast,function(a,b){var m=(b[1]-a[1])/((b[0]-a[0])||1);if(m<-.9)return '#00e000';if(m<-.12)return '#149a14';if(m<.12)return '#5a3a10';
 for(var q=0;q<hot.length;q++){if(a[0]>=hot[q][0]&&a[0]<hot[q][1])return m>.3?'#f00000':'#8a0808'}return '#6e1410'},3.8);
$('ma').innerHTML=s;

/* candles */
var COL={y:'#ffee00',b:'#1ca8e8',r:'#ff1e1e',g:'#66785e',l:'#10e010',m:'#ff00e0',d:'#2222b0',p:'#d84088',u:'#74404e',c:'#00f4f4',o:'#ff9c10',v:'#8cab50',k:'#000'};
var CD=[[200,'1120,1127,1207,1298,y;1150,1162,1210,1220,b;1150,1162,1177,1190,y;1080,1100,1177,1190,b;968,1022,1100,1130,g;937,967,1020,1020,g;897,970,985,995,r;950,985,991,1058,y;948,992,997,1022,r;906,988,994,1022,g;910,988,994,1030,r;975,985,994,1105,b;982,985,1140,1163,y;1060,1063,1140,1155,b;1000,1018,1063,1068,b;985,1018,1042,1070,y;983,1003,1042,1095,b;977,1003,1009,1060,y;1010,1012,1075,1310,r;985,1038,1075,1100,g;1022,1040,1045,1080,r;1015,1030,1040,1075,g;970,995,1027,1080,b;965,993,997,1030,g;945,970,1000,1030,b;822,853,973,975,b;838,842,852,897,b;825,829,841,860,g;800,829,862,865,r;825,862,912,965,y;783,787,912,938,b;785,790,832,900,y;700,760,832,835,r;745,760,762,790,g;742,760,825,852,y;760,762,825,850,b;592,592,770,773,g;538,478,595,622,g;326,328,478,490,g;283,328,337,372,r;198,217,337,370,g;112,205,216,260,r;183,190,205,305,g;78,138,187,275,g;135,142,180,258,r;150,182,226,280,r;190,226,250,300,r;250,250,412,448,y;348,380,409,463,b;380,380,468,570,y;405,469,529,551,y;478,508,529,530,b;420,428,457,530,b;393,428,439,465,y;360,383,439,482,b;360,383,385,450,k;283,383,394,440,r;340,395,412,420,y;345,365,412,440,y;340,365,400,465,y;378,400,448,475,y;420,448,495,582,r;475,497,580,655,m;530,583,672,680,p;550,568,674,678,l;515,568,658,725,p;490,514,658,660,d;465,488,514,530,b;410,488,502,535,y;480,493,503,540,y;475,493,562,562,m;560,562,600,705,p;530,592,598,678,l;507,535,592,600,c;520,533,536,585,k;510,527,535,560,o;520,527,541,560,p;457,542,546,597,y;495,535,546,575,c;510,540,565,578,o'],
[270,'335,352,403,422,u;338,380,403,412,l;355,364,379,383,l;365,376,440,445,u;440,440,568,590,u;500,568,598,615,l;540,595,670,675,u;590,670,673,800,k;550,565,673,675,c;500,540,562,590,c;480,520,540,572,c;460,482,520,545,c;390,437,482,485,d;360,437,450,485,m;388,442,450,495,c;430,446,482,490,o;470,484,512,530,o;490,505,511,555,c;485,505,580,585,p;550,580,637,640,u;620,640,658,698,u;630,658,670,685,u;545,590,670,698,c;560,590,630,650,o;620,630,835,838,u;780,805,835,845,l;690,697,805,810,l;655,660,697,705,c;615,660,667,720,l;660,667,808,890,u;660,662,808,815,l;598,628,662,690,c;560,616,632,650,c;590,595,618,622,c;595,610,622,650,o;590,610,673,730,p;600,602,670,685,l;530,532,598,630,d;418,455,532,570,b;430,442,455,500,b;420,440,460,490,b;405,458,463,500,g;358,358,463,465,b;290,358,361,480,k;152,165,361,361,g;140,167,175,180,g;145,177,184,185,r;145,181,245,250,y;192,226,245,250,b;160,211,226,252,b;190,211,274,310,y;220,274,337,385,y;320,337,485,520,r;450,484,498,562,r;370,406,498,525,b;395,406,484,525,y;480,484,652,720,m;528,532,655,683,l;505,532,556,576,p;470,496,563,575,d;470,495,517,545,m;415,440,515,517,d;375,438,444,505,y;435,442,450,505,b;440,442,463,480,y;418,459,461,485,k;418,452,580,617,m;560,580,625,715,p;620,628,725,745,u;620,658,722,750,l;585,631,658,660,o;620,631,691,695,u;690,691,733,788,u;705,733,736,795,u;730,736,754,768,u;750,754,766,875,l;740,767,800,828,u;730,770,796,825,l;730,733,770,842,c;555,560,733,735,c;535,547,558,590,c'],
[220,'660,695,735,750,o;655,667,733,743,c;637,667,710,715,o;620,633,710,712,d;577,586,632,632,v;570,586,625,645,r;600,625,700,773,m;645,683,686,745,k;660,685,695,715,c;517,601,685,688,d;352,352,601,640,g;160,183,353,358,r;135,142,185,297,g;84,124,142,165,r;52,64,124,140,g;60,61,95,155,r;85,94,181,212,y;115,136,179,205,b;115,136,157,198,y;150,157,283,312,y;260,283,305,362,y;280,298,304,328,b;298,298,511,512,r;510,518,541,590,m;520,541,571,665,p;405,451,571,575,d;430,451,508,515,y;470,508,514,545,y;485,517,571,692,m;545,571,613,662,p;575,584,613,657,l;555,584,615,655,o;565,599,615,642,c;560,592,601,608,c;520,535,652,653,l;423,535,547,550,o;435,457,547,565,d;420,448,457,510,y;412,440,448,505,m;352,418,440,485,c;392,397,418,438,d;400,404,426,485,m;418,424,454,548,p;450,454,541,545,p;445,448,541,545,l;442,448,583,590,u;490,553,583,590,l;520,553,565,578,u;465,487,565,585,c;480,487,568,590,o;530,571,595,638,u;400,470,595,598,l;415,421,470,470,l;418,424,448,470,p;415,421,451,480,l;375,400,424,425,l;360,388,401,420,d;277,349,388,390,v;297,350,352,395,k;345,349,355,388,u;306,349,358,368,r;345,357,359,417,k;277,316,358,360,g;280,301,316,345,g;273,301,394,400,y;300,319,394,400,b;300,318,320,345,k;275,277,337,372,b;205,211,277,300,y;190,208,277,285,y;265,277,385,413,y;282,385,397,408,r;395,397,495,530,m;380,388,496,513,d;337,388,460,465,m;430,460,469,500,o;425,433,469,518,l;365,397,436,480,d;350,382,397,405,b;360,370,382,400,b;330,370,403,408,y;390,403,424,482,m;400,415,424,440,c;355,367,415,462,d;335,352,367,368,b;333,355,365,385,y'],
[180,'408,478,485,490,y;475,478,545,550,m;457,466,548,555,d;375,436,464,465,v;400,406,436,460,g;396,406,436,465,r;322,327,434,435,g;232,256,328,340,r;183,232,260,267,r;55,145,232,290,r;72,143,146,158,k;117,130,143,155,g;55,70,80,113,g;52,70,76,248,y;58,76,151,168,y;118,140,155,202,b;96,119,140,197,b;60,70,119,130,b;52,70,116,140,y'],
[0,'415,415,655,655,g;370,380,415,468,r;345,380,403,415,r;335,382,403,480,b;305,327,382,385,b;300,303,327,342,b;232,303,314,340,r;258,310,313,330,k;303,310,442,483,y;440,442,613,620,y;505,505,613,620,b;465,505,528,590,y;462,502,528,585,b;438,482,502,540,b;440,480,488,563,y;398,488,495,515,y;478,490,495,535,k;452,482,497,500,b;445,482,615,662,r;518,598,617,625,v;580,598,625,645,r;582,622,631,702,r;585,613,632,668,v;580,613,625,640,r']];
var i=0,w='',bd='';
CD.forEach(function(sg0){var oy=sg0[0];sg0[1].split(';').forEach(function(t){var a=t.split(','),x=CX(i);
 var T=oy+a[0]/3,B1=oy+a[1]/3,B2=oy+a[2]/3,W=oy+a[3]/3;
 w+='M'+x.toFixed(1)+' '+T.toFixed(1)+'V'+W.toFixed(1);
 if(a[4]=='k'){bd+='<rect x="'+(x-2.4).toFixed(1)+'" y="'+B1.toFixed(1)+'" width="4.800" height="1.200" fill="#000"/>'}
 else bd+='<rect x="'+(x-2.1).toFixed(1)+'" y="'+B1.toFixed(1)+'" width="4.200" height="'+Math.max(1,B2-B1).toFixed(1)+'" fill="'+COL[a[4]]+'" stroke="#000" stroke-width=".9"/>';
 i++;})});
$('candles').innerHTML='<path d="'+w+'" stroke="#000" stroke-width="1" fill="none"/>'+bd;

/* panel 2 */
var s2='<rect x="28" y="672" width="1705" height="15" fill="#d7f5d7"/><rect x="28" y="734" width="1705" height="16" fill="#ffd8d8"/>';
['672.500','687.500','734.500','750.500'].forEach(function(y){s2+='<line x1="28" x2="1733" y1="'+y+'" y2="'+y+'" stroke="#000" stroke-width="1"/>'});
s2+='<line x1="28" x2="1733" y1="711.500" y2="711.500" stroke="#2020b0" stroke-width="1.500" stroke-dasharray="5 4"/>';
var f2=P(0,640,'85,165 135,218 180,135 205,130 235,155 290,180 325,250 345,252 380,205 400,200 460,140 510,125 590,110 625,150 680,145 720,170 750,165 770,115 820,110 890,130 920,220 960,290 1015,298 1050,230 1085,175 1110,175 1160,235 1210,290 1240,290 1265,270 1305,170 1330,172 1380,225 1410,205 1470,175')
.concat(P(500,640,'0,185 40,275 100,322 130,322 175,215 220,145 260,135 300,210 340,300 380,322 410,275 430,270 470,295 520,205 550,205 580,130 620,140 660,140 690,112 720,122 760,125 820,120 885,140 920,230 960,295 1000,275 1030,278 1090,180 1140,148 1170,220 1225,295 1280,265 1320,295 1385,240 1420,125 1475,125'))
.concat(P(1000,640,'0,115 30,130 45,140 80,240 135,125 160,100 200,105 250,130 280,220 310,290 360,310 380,295 430,250 465,265 510,265 570,165 625,125 670,150 710,225 765,295 800,270 820,270 860,180 900,125 945,120 985,170 1035,180 1070,190 1105,210 1125,150 1155,130 1185,210 1225,295 1280,272 1300,270 1330,185 1365,175 1400,195 1440,140 1460,150 1480,205'))
.concat(P(1500,640,'0,210 30,160 100,115 165,135 200,120 245,175 275,130 330,103 380,110 410,110 440,210 465,295 490,295 510,268 550,245 600,210 620,230 650,285 680,285 697,270'));
var sl=sm(P(0,640,'85,130 140,128 200,130 260,130 340,135 420,130 510,125 590,110 700,115 760,105 820,105 890,120 950,145 1000,165 1080,150 1130,150 1190,155 1245,190 1310,170 1360,190 1430,185')
.concat(P(500,640,'0,185 60,195 100,225 135,245 170,235 235,208 280,230 320,255 370,290 420,293 465,315 510,293 560,290 600,268 650,268 700,245 750,218 790,165 820,130 860,140 910,150 950,195 990,200 1035,235 1070,215 1120,190 1170,200 1220,258 1270,265 1310,292 1360,295 1385,292 1420,240 1460,228'))
.concat(P(1000,640,'0,215 30,200 60,210 90,215 130,150 160,105 200,105 250,125 310,160 365,210 410,203 470,225 520,228 570,205 620,188 670,185 720,200 770,213 830,215 880,195 940,175 1000,168 1060,165 1120,162 1170,150 1230,190 1280,225 1330,205 1400,212 1460,208'))
.concat(P(1500,640,'0,213 50,175 100,125 170,125 220,118 300,105 400,105 430,125 480,165 540,155 600,155 640,175 697,190')));
var sh=sl.map(function(a){return [Math.min(a[0]+9,1733),a[1]]});
s2+='<clipPath id="ct"><rect x="28" y="665" width="1705" height="22"/></clipPath><clipPath id="cb"><rect x="28" y="734" width="1705" height="20"/></clipPath>';
var bp=pl(sl)+' 1733,687 28,687';
s2+='<polygon points="'+bp+'" fill="#1a7a1a" fill-opacity=".45" clip-path="url(#ct)"/>';
var bp2=pl(sl)+' 1733,734 28,734';
s2+='<polygon points="'+bp2+'" fill="#a04010" fill-opacity=".4" clip-path="url(#cb)"/>';
s2+='<polygon points="'+pl(sl)+' '+pl(sh.slice().reverse())+'" fill="#a860d0" fill-opacity=".3"/>';
s2+='<polyline points="'+pl(f2.map(function(a){return [Math.min(a[0]+3,1733),a[1]]}))+'" fill="none" stroke="#333" stroke-width="1" stroke-dasharray="3 2"/>';
s2+=seg(f2,function(a,b){return b[1]<a[1]?'#000':'#e02828'},1.800);
s2+='<polyline points="'+pl(sh)+'" fill="none" stroke="#333" stroke-width="2.800" stroke-dasharray="7 5"/>';
s2+=seg(sl,function(a,b){return b[1]<a[1]-.05?'#0000c0':'#ff0000'},3.600);
function tris(ox,oy,str,up,c,h,w){return P(ox,oy,str).map(function(p){return tri(p[0],p[1],up,c,h,w)}).join('')}
var TB='#0000a8',TR='#a00000';
s2+=tris(0,640,'150,205 360,240 625,148 735,170 1015,298 1225,292 1260,272 1385,226',1,TB)+tris(0,640,'203,130 590,112 680,138 820,112 1100,175 1240,290 1330,172 1490,183',0,TR);
s2+=tris(500,640,'133,320 380,320 465,295 540,220 660,142 750,125 785,120 820,122 960,292 1033,278 1225,295 1317,295',1,TB)+tris(500,640,'257,135 432,270 518,210 610,130 715,118 765,124 802,113 838,124 995,276 1137,148 1275,265 1475,125',0,TR);
s2+=tris(1000,640,'97,230 182,105 378,297 468,268 502,265 750,282 785,292 822,270 927,124 1035,186 1120,184 1225,295 1297,270 1403,196',1,TB)+tris(1000,640,'45,138 165,103 203,105 432,252 485,265 765,298 800,270 905,127 943,120 1068,180 1155,130 1278,272 1365,175 1457,145',0,TR);
s2+=tris(1500,640,'168,138 257,168 380,118 485,295 662,290',1,TB)+tris(1500,640,'40,155 115,120 200,122 345,112 395,110 605,215',0,TR);
$('p2').innerHTML=s2;

/* panel 3 */
var BC={L:'#c4c4f6',K:'#ffa8a8',G:'#6cc06c',R:'#bb6a6a'};
var BD=[[0,'L105,123 L141,192 L246,264 L282,300 L318,356 L370,388 L423,441 L460,492 L510,582 L618,636 L668,686 L704,776 L777,811 L828,864 L933,951 L987,1023 L1041,1059 R1182,1200 R1323,1341 K1200,1218 K1233,1251 K1269,1287 K1341,1359 K1392,1464 K1482,1500 G1251,1269'],
[500,'K0,18 K52,88 K105,123 K265,300 K318,387 K405,441 K510,528 K600,636 K1023,1041 R228,246 R987,1005 R1059,1077 R1164,1182 G211,228 G651,669 G1041,1059 G1077,1091 G1482,1500 L669,759 L775,793 L846,882 L951,969 L1110,1128 L1146,1164 K1182,1218 K1233,1287 K1305,1323 K1341,1359 K1428,1446 K1464,1482'],
[1000,'L0,15 L105,123 L141,159 L174,192 L228,246 L300,318 L933,987 L1005,1059 L1075,1093 L1110,1128 L1305,1341 L1410,1428 L1446,1464 R33,51 R333,351 R423,441 R600,618 R651,669 R1200,1218 R1233,1251 R1359,1377 R1464,1482 K51,69 K351,369 K441,459 K474,492 K546,564 K669,705 K723,741 K759,777 K793,828 K864,882 K1251,1269 G87,105 G369,387 G564,582 G633,651 G915,933 G1218,1233 G1287,1305 G1392,1410 G1482,1500'],
[1500,'L15,33 L51,69 L123,177 L210,264 L282,300 L333,387 L405,423 L459,477 L492,528 L582,600 L615,633 L669,687']];
var s3='';
BD.forEach(function(d){d[1].split(' ').forEach(function(t){var c=t[0],a=t.slice(1).split(','),x1=d[0]+a[0]/3,x2=d[0]+a[1]/3;s3+='<rect x="'+x1.toFixed(1)+'" y="755" width="'+(x2-x1).toFixed(1)+'" height="82" fill="'+BC[c]+'"/>'})});
[761.5,833.5].forEach(function(y){s3+='<line x1="28" x2="1733" y1="'+y+'" y2="'+y+'" stroke="#000" stroke-dasharray="5 4"/>'});
s3+='<line x1="28" x2="1733" y1="779.500" y2="779.500" stroke="#2020a0" stroke-width="1.800"/><line x1="28" x2="1733" y1="797.500" y2="797.500" stroke="#2020b0" stroke-width="1.500" stroke-dasharray="5 4"/><line x1="28" x2="1733" y1="815.500" y2="815.500" stroke="#c81010" stroke-width="1.500"/>';
var w3=P(0,640,'85,395 100,430 120,410 140,410 150,395 195,397 290,397 315,445 340,407 375,403 395,400 415,425 460,410 500,397 570,367 605,405 625,370 660,380 700,405 750,375 770,365 790,375 820,380 860,375 910,395 935,425 980,447 1030,425 1070,418 1120,425 1175,470 1215,498 1245,475 1275,465 1320,470 1355,512 1385,492 1440,520 1470,520')
.concat(P(500,640,'0,535 40,530 85,575 120,578 150,512 205,475 240,478 300,488 345,525 380,535 400,507 435,580 455,570 480,520 505,520 520,550 545,497 590,482 630,505 680,420 730,405 750,368 765,390 785,370 825,375 845,395 875,385 905,410 930,465 960,445 1000,510 1030,470 1085,465 1120,450 1155,465 1205,520 1260,560 1310,565 1330,550 1355,560 1385,540 1410,485 1440,495 1475,470'))
.concat(P(1000,640,'0,450 40,480 80,480 100,440 120,368 200,368 230,393 250,385 280,415 305,420 325,480 370,455 420,475 460,490 530,485 570,470 620,470 680,487 700,510 720,490 740,520 770,530 790,515 820,550 850,490 880,498 960,445 985,410 1015,405 1050,375 1070,425 1085,390 1130,365 1165,425 1205,505 1240,500 1265,500 1285,470 1330,450 1360,475 1420,445 1470,465'))
.concat(P(1500,640,'0,430 45,440 60,375 120,400 175,370 205,400 250,375 285,365 330,380 400,375 430,410 455,448 465,430 520,425 580,428 610,462 680,462 697,470'));
s3+='<clipPath id="c3a"><rect x="28" y="755" width="1705" height="24.500"/></clipPath><clipPath id="c3b"><rect x="28" y="815.500" width="1705" height="22"/></clipPath>';
s3+='<polygon points="'+pl(w3)+' 1733,779.500 28,779.500" fill="#1a801a" fill-opacity=".42" clip-path="url(#c3a)"/>';
s3+='<polygon points="'+pl(w3)+' 1733,815.500 28,815.500" fill="#700000" fill-opacity=".5" clip-path="url(#c3b)"/>';
s3+=seg(w3,function(a,b){var m=(a[1]+b[1])/2;if(m<779)return '#10c010';if(m>816)return '#8c0c0c';return b[1]<a[1]?'#0000c8':'#ff9a10'},3.600);
s3+=tris(0,640,'1245,475',1,TB,5,6)+tris(0,640,'1175,470 1317,470',0,TR,5,6);
s3+=tris(500,640,'205,475 645,475 1035,475 1070,475 1475,475',1,TB,5,6)+tris(500,640,'220,470 980,470 1050,470 1157,470',0,TR,5,6);
s3+=tris(1000,640,'80,475 360,475 560,475 625,475 910,475 1208,475 1280,480 1385,475 1475,475',1,TB,5,6)+tris(1000,640,'25,470 325,470 415,470 593,470 645,470 1190,470 1225,470 1350,470 1455,470',0,TR,5,6);
$('p3').innerHTML=s3;

/* panel 4 */
var ao=sm(P(0,640,'85,760 140,767 165,745 190,728 250,740 300,755 330,790 390,778 440,795 510,785 560,740 590,745 700,750 730,745 765,660 830,628 870,640 910,680 970,785 1000,825 1060,810 1130,795 1170,800 1225,853 1265,840 1300,800 1370,810 1420,795')
.concat(P(500,640,'0,795 60,800 100,860 135,878 170,845 230,788 270,782 340,805 385,830 420,820 470,865 505,820 540,830 590,778 640,785 690,735 730,738 800,680 830,682 900,735 945,820 975,820 1020,865 1110,805 1160,800 1225,855 1300,850 1370,850 1420,775'))
.concat(P(1000,640,'0,740 25,730 75,770 105,770 130,680 165,630 195,632 250,690 300,750 360,858 400,848 465,870 540,840 600,780 660,755 720,785 770,800 830,795 870,770 960,748 1050,750 1090,770 1180,760 1230,820 1280,825 1330,790 1420,780'))
.concat(P(1500,640,'0,780 60,755 130,700 190,695 210,725 270,735 310,695 335,695 370,700 400,693 440,740 465,795 540,798 600,800 630,830 665,838 697,825')));
var sg=sm(P(0,640,'85,745 150,760 200,735 260,715 320,745 400,760 480,778 540,765 620,750 700,750 780,700 830,630 880,618 950,680 1030,750 1100,748 1170,775 1240,830 1300,825 1380,830 1430,825')
.concat(P(500,640,'0,805 60,803 110,845 165,866 215,840 260,800 300,797 380,835 470,850 520,850 600,805 670,795 750,745 830,695 875,685 960,760 1010,795 1070,815 1120,795 1160,795 1250,855 1340,870 1390,870 1440,830'))
.concat(P(1000,640,'0,775 60,765 105,770 160,680 220,635 250,635 300,680 370,770 430,797 480,820 545,830 600,808 660,793 750,815 830,810 870,785 950,755 1050,750 1180,752 1230,785 1280,800 1400,795'))
.concat(P(1500,640,'0,788 60,780 130,725 190,702 260,712 310,695 350,670 400,660 450,680 510,745 600,755 650,785 697,815')));
var s4='',Z=903;
for(var k=0;k<290;k++){var x=CX(k),ya=lerpY(ao,x),yb=lerpY(ao,x+3),ys=lerpY(sg,x+3),ys2=lerpY(sg,x+6);
 s4+='<line x1="'+(x+3).toFixed(1)+'" x2="'+(x+3).toFixed(1)+'" y1="'+Z+'" y2="'+ys.toFixed(1)+'" stroke="'+(ys2>ys?'#ffc4c4':'#c4ffc4')+'" stroke-width="1.600"/>';
 var c=ya<Z?(yb<ya?'#0000e0':'#ff00e0'):(yb<ya?'#108878':'#f00000');
 s4+='<line x1="'+x.toFixed(1)+'" x2="'+x.toFixed(1)+'" y1="'+Z+'" y2="'+ya.toFixed(1)+'" stroke="'+c+'" stroke-width="3.200"/>';}
s4+='<line x1="28" x2="1734" y1="903" y2="903" stroke="#1010e0" stroke-width="2"/>';
s4+=seg(sg,function(a,b){return b[1]<a[1]?'#70f070':'#ff9a10'},3.200);
s4+=seg(ao,function(a,b){return b[1]<a[1]?'#101050':'#b000b0'},3.600);
var TY='#ffee00',TC='#00e8f0';
s4+=tris(0,640,'97,750 220,730 612,748 660,740 700,740 838,630',0,TY)+tris(0,640,'168,755 540,765 645,745 680,740 752,705 1280,815',1,TC);
s4+=tris(500,640,'22,803 78,825 360,825 452,862 858,710',0,TY)+tris(500,640,'45,803 168,843 380,833 485,835 1245,845',1,TC);
s4+=tris(1000,640,'78,765 222,652 838,807 998,752 1068,760 1175,767',0,TY)+tris(1000,640,'98,762 558,820 858,787 1050,752 1140,755 1422,787',1,TC);
s4+=tris(1500,640,'203,708 325,688',0,TY)+tris(1500,640,'310,695',1,TC);
$('p4').innerHTML=s4;

/* panel 5 */
var BG={l:'#40f840',y:'#ffff80',k:'#5c0a0a',v:'#6a6ac8',s:'#b0e8ff'};
var BS=[[0,'85,105,l 105,159,y 159,210,l 210,246,y 246,336,l 336,351,y 351,369,l 369,405,y 405,423,l 423,441,k 441,528,y 528,546,l 546,600,y 600,668,l 668,723,y 723,759,l 759,777,k 777,792,s 792,882,v 882,918,s 918,936,v 936,951,s 951,987,v 987,1059,s 1059,1164,y 1164,1200,l 1200,1218,k 1218,1269,v 1269,1341,s 1341,1359,y 1359,1377,k 1377,1500,y'],
[500,'0,18,l 18,69,y 69,159,l 159,336,y 336,351,l 351,387,y 387,477,l 477,510,y 510,528,l 528,546,k 546,564,v 564,582,s 582,669,y 669,687,l 687,759,y 759,792,l 792,882,y 882,936,l 936,951,k 951,1023,v 1023,1110,s 1110,1164,y 1164,1236,l 1236,1323,y 1323,1359,l 1359,1377,y 1377,1392,l 1392,1410,k 1410,1500,y'],
[1000,'0,33,y 33,69,l 69,87,y 87,105,l 105,123,k 123,159,v 159,264,s 264,282,v 282,300,s 300,318,y 318,333,k 333,351,s 351,387,v 387,423,s 423,459,v 459,510,s 510,546,y 546,582,l 582,669,y 669,759,l 759,792,y 792,810,l 810,828,y 828,864,l 864,933,y 933,951,l 951,1059,y 1059,1092,l 1092,1110,y 1110,1233,l 1233,1251,k 1251,1287,s 1287,1305,v 1305,1482,y 1482,1500,l'],
[1500,'0,18,l 18,51,y 51,141,l 141,177,y 177,210,l 210,282,y 282,300,k 300,318,v 318,333,s 333,351,v 351,369,s 369,423,y 423,441,l 441,459,k 459,510,v 510,582,s 582,600,y 600,618,k 618,633,v 633,651,s 651,669,v 669,687,s 687,705,y']];
var s5='<rect x="28" y="937" width="1707" height="58" fill="#fff"/>';
BS.forEach(function(d){d[1].split(' ').forEach(function(t){var a=t.split(','),x1=d[0]+a[0]/3,x2=d[0]+a[1]/3;s5+='<rect x="'+x1.toFixed(1)+'" y="937" width="'+(x2-x1+.3).toFixed(1)+'" height="58" fill="'+BG[a[2]]+'"/>'})});
s5+='<rect x="28" y="965" width="1707" height="30" fill="#646480" fill-opacity=".27"/>';
var RB=[[0,'85,105,1027,1027,b 105,150,1030,1045,r 150,210,1040,1037,b 210,245,1040,1045,r 245,340,1045,1005,b 340,400,1012,1012,r 400,440,980,965,b 440,525,975,1045,r 525,545,1012,1012,b 545,610,1020,1045,r 610,670,1030,1007,b 670,720,1012,1020,r 720,775,995,950,b 775,790,950,950,r 790,880,935,918,b 880,915,925,925,r 915,945,920,920,b 945,985,905,898,b 985,1160,915,1000,r 1160,1240,990,925,b 1240,1355,930,965,r 1355,1375,965,965,b 1375,1500,970,1040,r'],
[500,'0,65,1035,1050,r 65,160,1040,995,b 160,330,1000,1045,r 330,350,1040,1040,b 350,385,1045,1045,r 385,477,1035,970,b 477,510,980,985,r 510,565,965,945,b 565,665,955,1005,r 665,690,990,990,b 690,755,990,1015,r 755,790,1005,982,b 790,880,985,1015,r 880,1020,1015,912,b 1020,1165,915,1005,r 1165,1230,990,975,b 1230,1320,978,990,r 1320,1405,990,965,b 1405,1500,968,995,r'],
[1000,'0,30,995,1010,r 30,70,995,995,b 70,85,1000,1000,r 85,105,990,990,b 105,160,952,900,b 160,310,905,960,r 310,332,955,955,b 332,350,955,955,r 350,385,950,937,b 385,420,940,950,r 420,460,940,940,b 460,545,945,978,r 545,585,980,975,b 585,665,985,1018,r 665,760,1020,995,b 760,790,1003,1003,r 790,810,1000,1000,b 810,825,1002,1002,r 825,865,985,985,b 865,930,990,1035,r 930,950,1030,1030,b 950,1055,1030,1055,r 1055,1095,1045,1037,b 1095,1105,1042,1042,r 1105,1235,1040,960,b 1235,1285,960,970,r 1285,1305,965,965,b 1305,1485,975,1035,r 1485,1500,1025,1025,b'],
[1500,'0,15,1025,1025,b 15,50,1025,1025,r 50,140,1025,980,b 140,175,985,995,r 175,210,975,965,b 210,280,970,980,r 280,315,958,948,b 315,330,955,955,r 330,350,948,948,b 350,420,955,985,r 420,440,975,975,b 440,510,950,937,b 510,590,940,970,r 590,630,958,952,b 630,650,960,960,r 650,670,958,958,b 670,710,960,975,r']];
var R=[];RB.forEach(function(d){d[1].split(' ').forEach(function(t){var a=t.split(',');R.push([d[0]+a[0]/3,d[0]+a[1]/3,640+a[2]/3,640+a[3]/3,a[4]])})});
for(var k=0;k<=290;k++){var x=CX(k);for(var j=0;j<R.length;j++){var r=R[j];if(x>=r[0]&&x<r[1]){var top=r[2]+(r[3]-r[2])*(x-r[0])/(r[1]-r[0]);
 s5+='<rect x="'+(x-2.7).toFixed(1)+'" y="'+top.toFixed(1)+'" width="5.400" height="'+(995-top).toFixed(1)+'" fill="'+(r[4]=='b'?'#1a1ac4':'#c8402c')+'" fill-opacity=".82" stroke="'+(r[4]=='b'?'#4f78c8':'#e88a78')+'" stroke-width=".8"/>';break}}}
s5+='<line x1="28" x2="1735" y1="964.500" y2="964.500" stroke="#000" stroke-width="1"/>';
$('p5').innerHTML=s5;
})();
</script>
</body></html>
